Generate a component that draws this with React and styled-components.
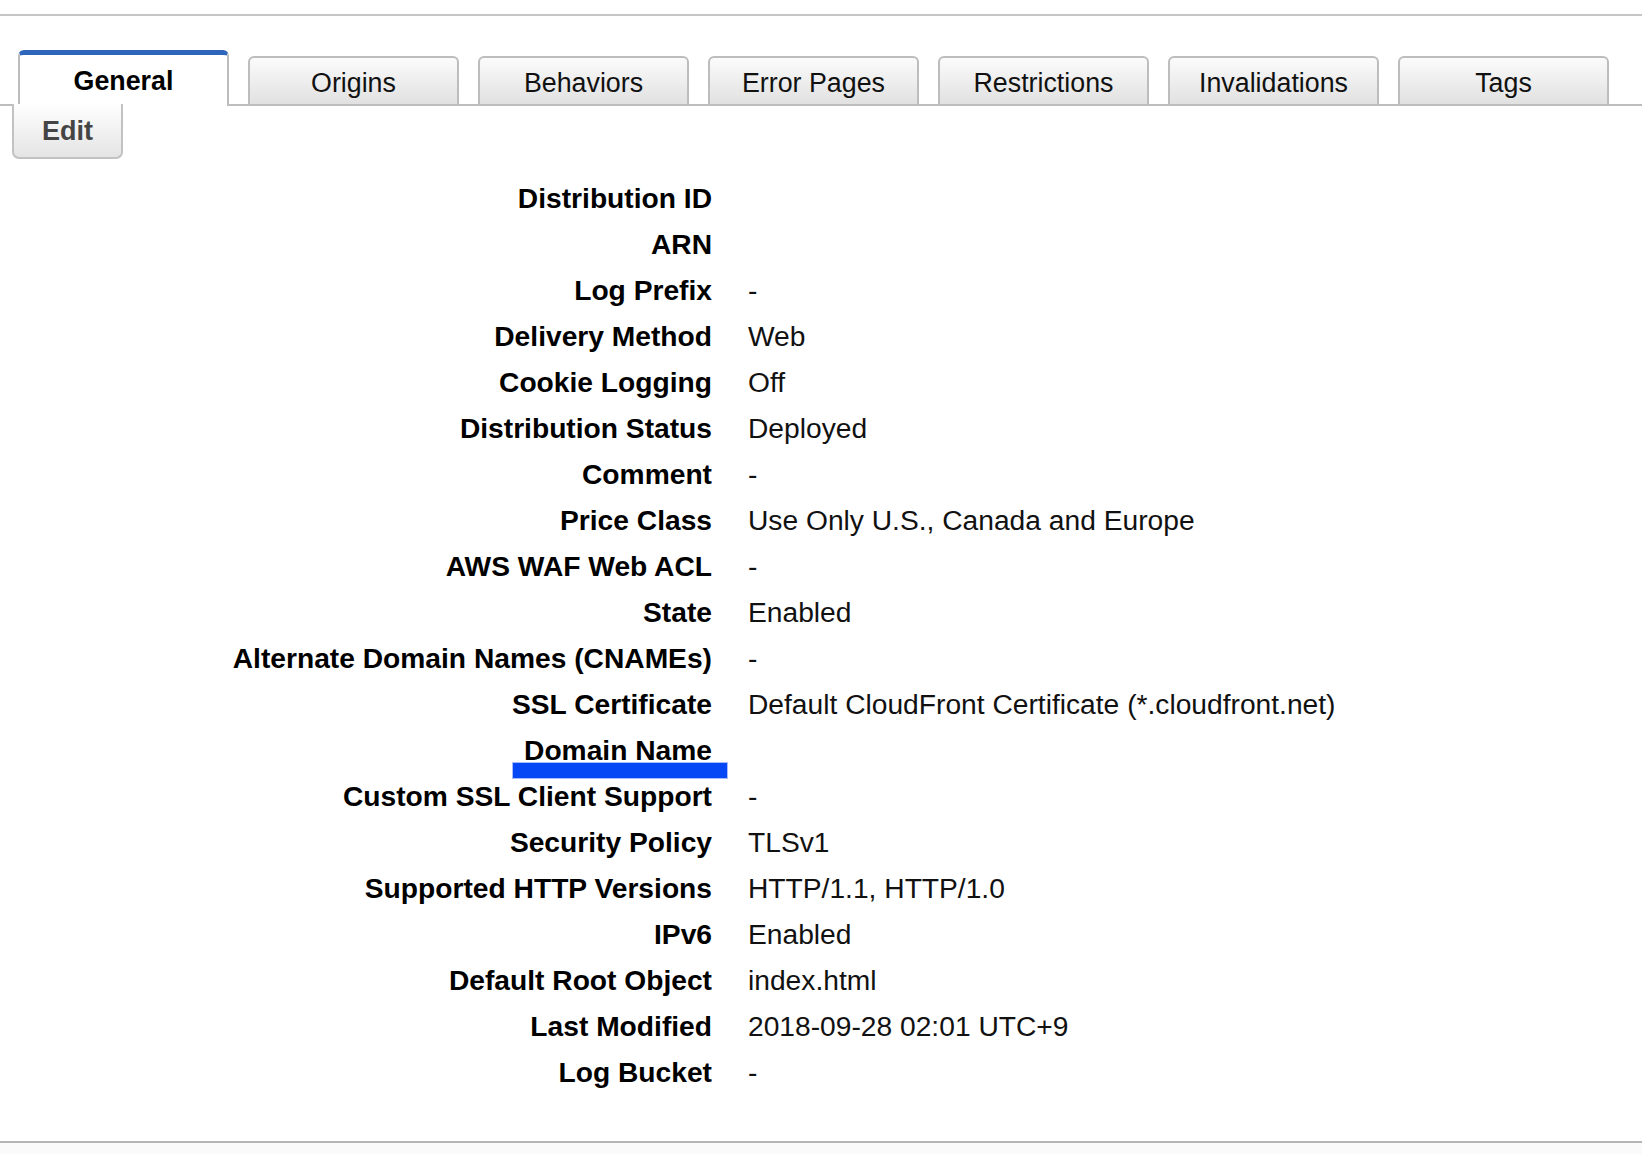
import React from "react";
import styled, { createGlobalStyle } from "styled-components";

const GlobalStyle = createGlobalStyle`
  html, body {
    margin: 0;
    padding: 0;
    background: #ffffff;
  }
  body {
    font-family: "Liberation Sans", Arial, Helvetica, sans-serif;
    color: #000;
  }
`;

const tabs = [
  "General",
  "Origins",
  "Behaviors",
  "Error Pages",
  "Restrictions",
  "Invalidations",
  "Tags",
];

const details = [
  { label: "Distribution ID", value: "" },
  { label: "ARN", value: "" },
  { label: "Log Prefix", value: "-" },
  { label: "Delivery Method", value: "Web" },
  { label: "Cookie Logging", value: "Off" },
  { label: "Distribution Status", value: "Deployed" },
  { label: "Comment", value: "-" },
  { label: "Price Class", value: "Use Only U.S., Canada and Europe" },
  { label: "AWS WAF Web ACL", value: "-" },
  { label: "State", value: "Enabled" },
  { label: "Alternate Domain Names (CNAMEs)", value: "-" },
  { label: "SSL Certificate", value: "Default CloudFront Certificate (*.cloudfront.net)" },
  { label: "Domain Name", value: "", marked: true },
  { label: "Custom SSL Client Support", value: "-" },
  { label: "Security Policy", value: "TLSv1" },
  { label: "Supported HTTP Versions", value: "HTTP/1.1, HTTP/1.0" },
  { label: "IPv6", value: "Enabled" },
  { label: "Default Root Object", value: "index.html" },
  { label: "Last Modified", value: "2018-09-28 02:01 UTC+9" },
  { label: "Log Bucket", value: "-" },
];

const Page = styled.div`
  display: flex;
  flex-direction: column;
  min-height: 1154px;
`;

const TopRule = styled.div`
  height: 14px;
  border-bottom: 2px solid #c6c6c6;
`;

const TabBar = styled.div`
  box-sizing: border-box;
  display: flex;
  align-items: flex-end;
  gap: 19px;
  height: 90px;
  padding-left: 18px;
  border-bottom: 2px solid #bdbdbd;
`;

const Tab = styled.div`
  box-sizing: border-box;
  width: 211px;
  text-align: center;
  font-size: 26.8px;
  border: 2px solid #bdbdbd;
  border-bottom: none;
  border-radius: 6px 6px 0 0;
  cursor: pointer;
  ${(p) =>
    p.active
      ? `
    height: 56px;
    margin-bottom: -2px;
    padding-top: 1px;
    border-top: 5px solid #2d66bb;
    background: #ffffff;
    font-weight: bold;
    line-height: 50px;
    color: #000;
  `
      : `
    height: 48px;
    padding-top: 3px;
    line-height: 44px;
    background: linear-gradient(#fbfbfb, #e1e1e1);
    color: #111;
  `}
`;

const EditButton = styled.button`
  box-sizing: border-box;
  align-self: flex-start;
  width: 111px;
  height: 55px;
  margin: -2px 0 0 12px;
  padding: 2px 0 0;
  border: 2px solid #c2c2c2;
  border-top: none;
  border-radius: 0 0 7px 7px;
  background: linear-gradient(#ffffff, #e4e4e4);
  font-family: inherit;
  font-size: 27px;
  font-weight: bold;
  color: #444;
  cursor: pointer;
`;

const DetailList = styled.dl`
  display: grid;
  grid-template-columns: 712px 1fr;
  grid-auto-rows: 46px;
  column-gap: 36px;
  margin: 16px 0 0;
  font-size: 28.2px;
  line-height: 46px;
`;

const Label = styled.dt`
  margin: 0;
  text-align: right;
  font-weight: bold;
  white-space: nowrap;
`;

const LabelText = styled.span`
  position: relative;
  display: inline-block;
  ${(p) =>
    p.marked &&
    `
    &::after {
      content: "";
      position: absolute;
      left: -11px;
      right: -15px;
      top: 36px;
      height: 15px;
      background: #0546f5;
      box-shadow: 0 0 0 1px rgba(80, 120, 255, 0.5);
    }
  `}
`;

const Value = styled.dd`
  margin: 0;
  color: #111;
  white-space: nowrap;
`;

const BottomRule = styled.div`
  margin-top: 46px;
  border-top: 2px solid #b6b6b6;
  flex: 1;
  background: #fafafa;
`;

export default function App() {
  return (
    <>
      <GlobalStyle />
      <Page>
        <TopRule />
        <TabBar>
          {tabs.map((t) => (
            <Tab key={t} active={t === "General"}>
              {t}
            </Tab>
          ))}
        </TabBar>
        <EditButton>Edit</EditButton>
        <DetailList>
          {details.map((d) => (
            <React.Fragment key={d.label}>
              <Label>
                <LabelText marked={d.marked}>{d.label}</LabelText>
              </Label>
              <Value>{d.value}</Value>
            </React.Fragment>
          ))}
        </DetailList>
        <BottomRule />
      </Page>
    </>
  );
}
